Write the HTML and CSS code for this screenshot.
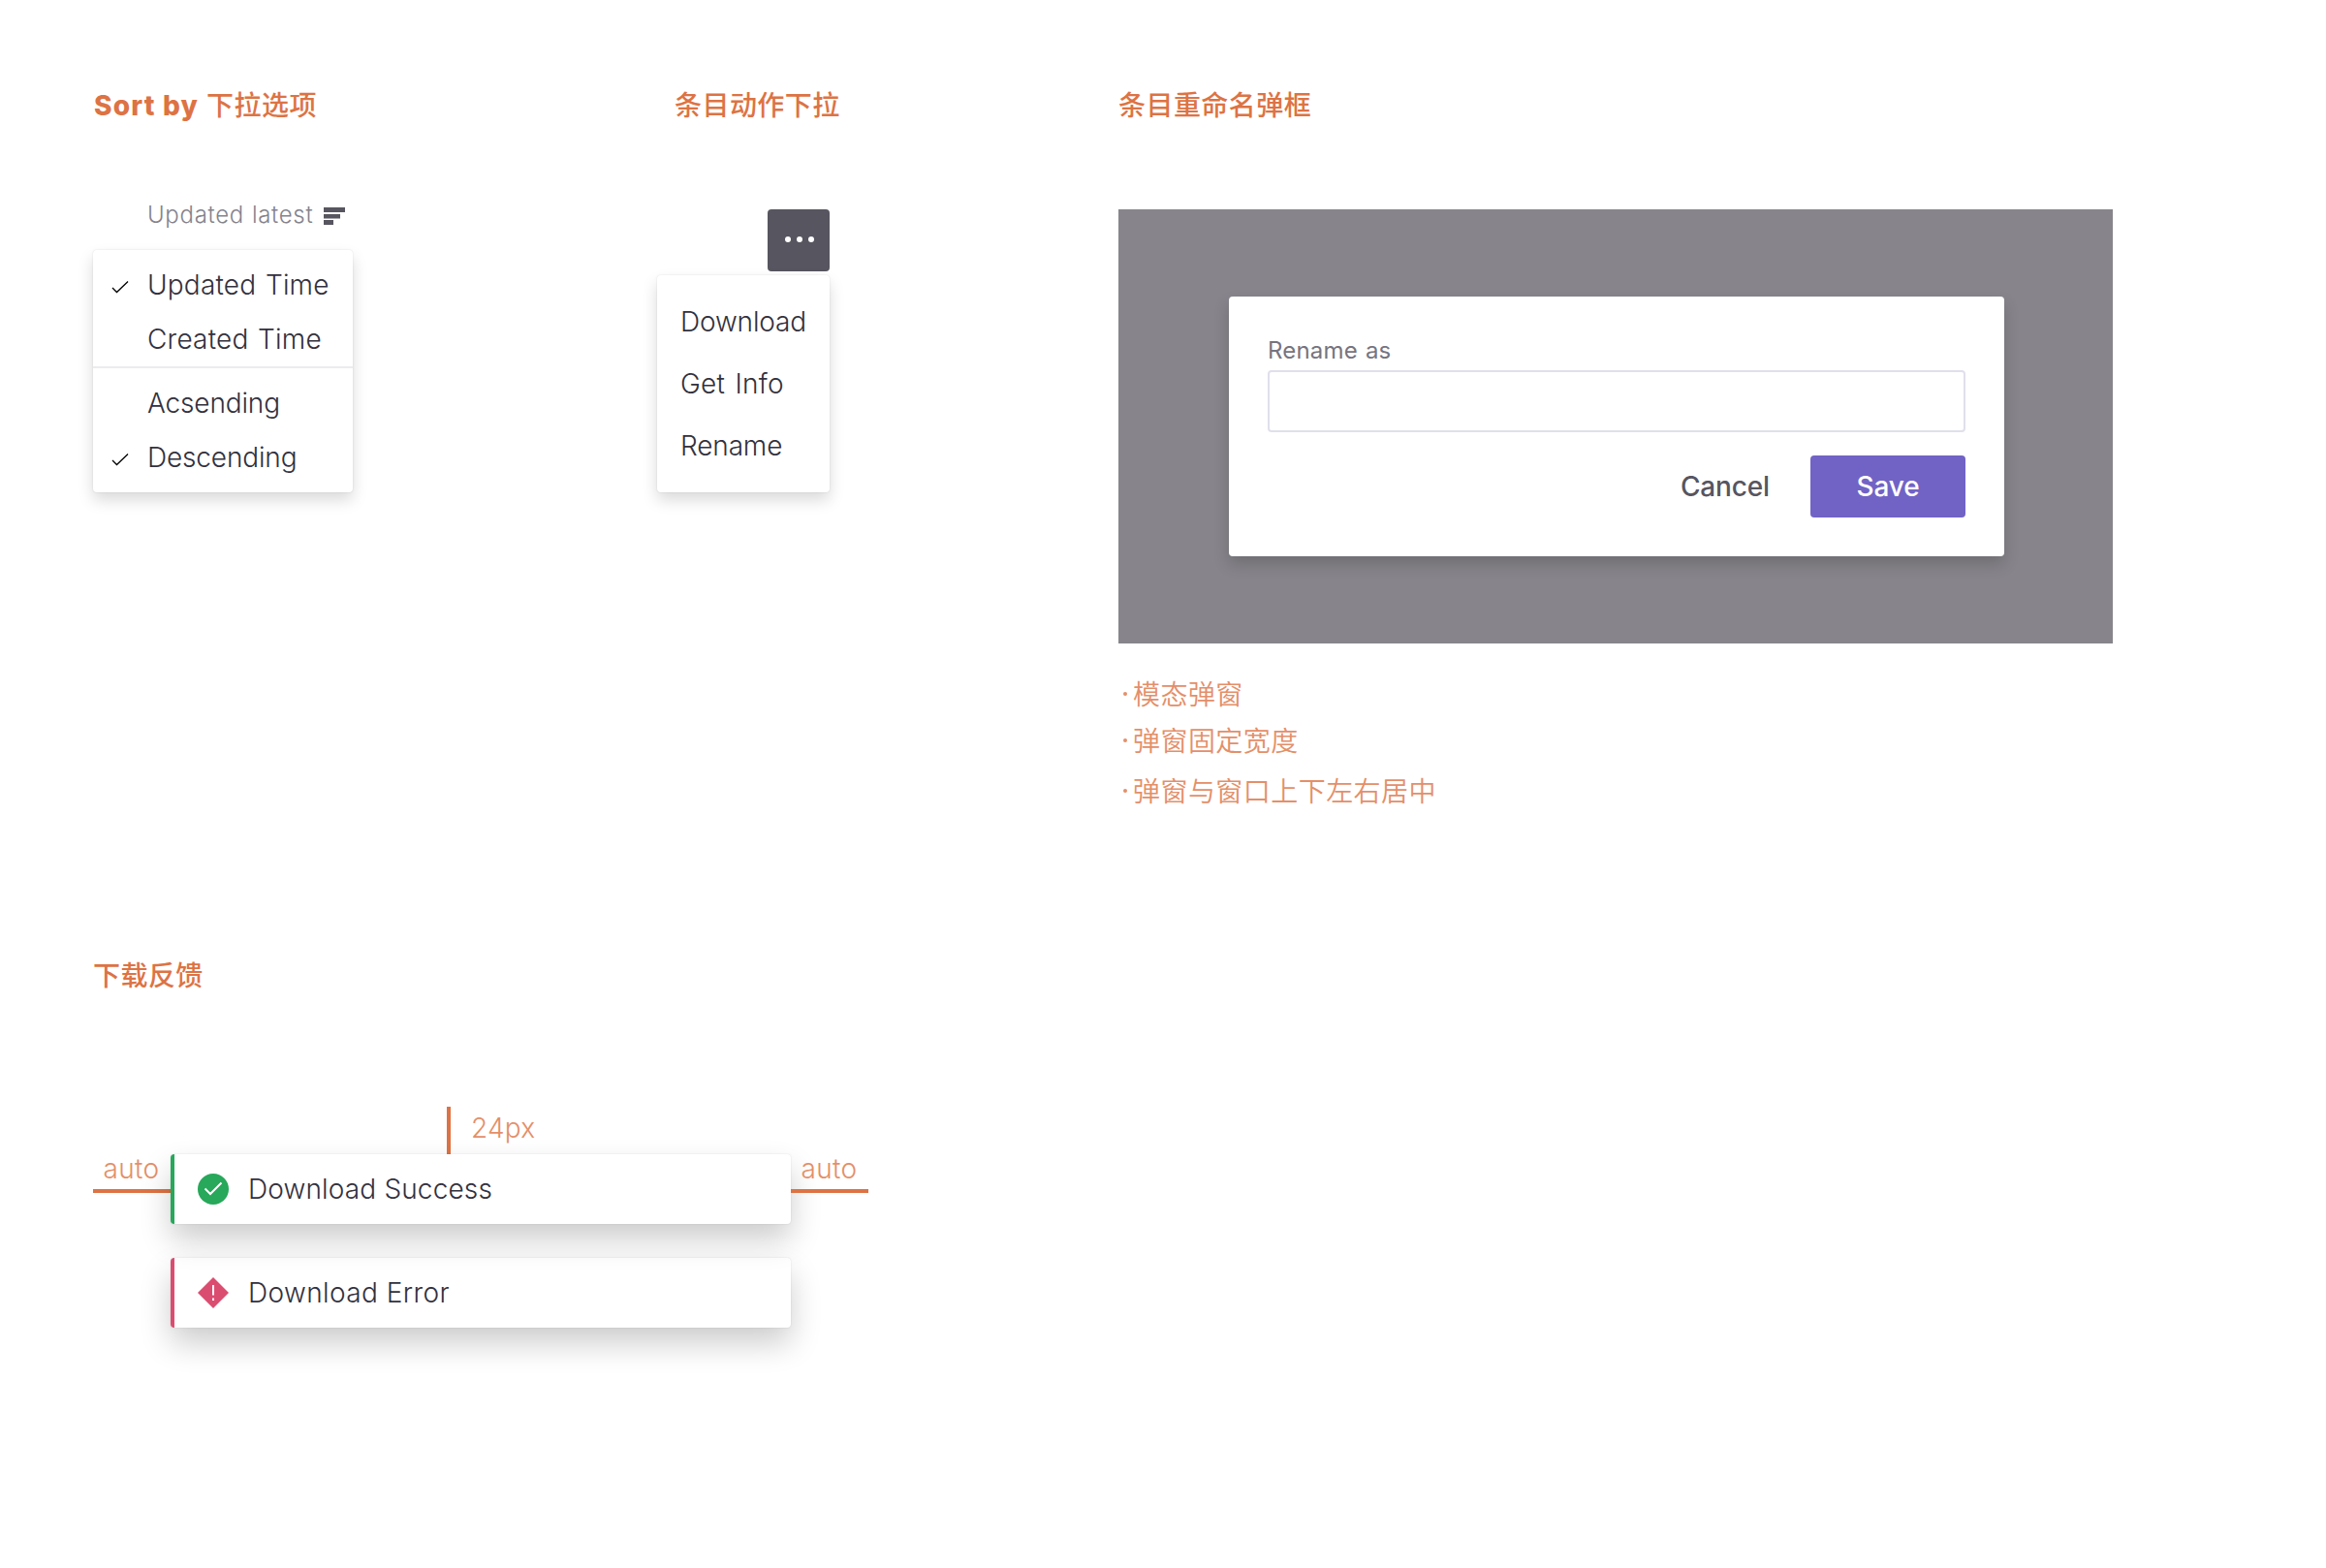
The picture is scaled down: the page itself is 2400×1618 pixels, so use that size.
FILE: index.html
```html
<!DOCTYPE html>
<html lang="zh-CN">
<head>
<meta charset="utf-8">
<title>Dropdowns, dialog and toasts</title>
<link rel="stylesheet" href="styles.css">
</head>
<body>
<main class="page">
  <div class="row">
    <section class="spec spec-sort">
      <h2 class="title"><span class="title-latin">Sort by</span>下拉选项</h2>
      <div class="sort-trigger">
        <span class="sort-label">Updated latest</span>
        <svg class="sort-icon" viewBox="0 0 22 18"><path d="M0 0h22v5H0zM0 7h17v4.500H0zM0 13h10v5H0z"/></svg>
      </div>
      <div class="menu">
        <ul class="group group-field">
          <li class="item"><svg class="tick" viewBox="0 0 18 14"><path d="M1 8 5.500 12.500 17 1.500"/></svg>Updated Time</li>
          <li class="item">Created Time</li>
        </ul>
        <ul class="group group-order">
          <li class="item">Acsending</li>
          <li class="item"><svg class="tick" viewBox="0 0 18 14"><path d="M1 8 5.500 12.500 17 1.500"/></svg>Descending</li>
        </ul>
      </div>
    </section>

    <section class="spec spec-actions">
      <h2 class="title">条目动作下拉</h2>
      <button class="more" aria-label="More"><svg class="more-icon" viewBox="0 0 64 64"><circle cx="21" cy="31" r="3"/><circle cx="33" cy="31" r="3"/><circle cx="45" cy="31" r="3"/></svg></button>
      <ul class="menu menu-actions">
        <li class="action">Download</li>
        <li class="action action-info">Get Info</li>
        <li class="action">Rename</li>
      </ul>
    </section>

    <section class="spec spec-rename">
      <h2 class="title">条目重命名弹框</h2>
      <div class="backdrop">
        <form class="dialog">
          <label class="field-label" for="name">Rename as</label>
          <input class="field" id="name" type="text">
          <div class="buttons">
            <button class="cancel" type="button">Cancel</button>
            <button class="save" type="button">Save</button>
          </div>
        </form>
      </div>
      <ul class="notes">
        <li class="note">模态弹窗</li>
        <li class="note">弹窗固定宽度</li>
        <li class="note note-last">弹窗与窗口上下左右居中</li>
      </ul>
    </section>
  </div>

  <section class="spec spec-toast">
    <h2 class="title">下载反馈</h2>
    <div class="top-gap">24px</div>
    <div class="toast-row">
      <div class="side">auto</div>
      <div class="toast toast-success">
        <svg class="state" viewBox="0 0 32 32"><circle cx="16" cy="16" r="16"/><path class="mark" d="m7.500 15.500 5.500 5.500L24.500 9.500"/></svg>
        <span>Download Success</span>
      </div>
      <div class="side">auto</div>
    </div>
    <div class="toast toast-error">
      <svg class="state" viewBox="0 0 32 32"><path d="M16 0 32 16 16 32 0 16z"/><path class="mark" d="M16 8v10.500M16 21.500V24"/></svg>
      <span>Download Error</span>
    </div>
  </section>
</main>
</body>
</html>
```
FILE: styles.css
```css
* { box-sizing: border-box; }
body { margin: 0; background: #fff; color: #33313d; font: 300 28px/56px Inter, "Noto Sans CJK SC", sans-serif; }
ul { list-style: none; margin: 0; padding: 0; }
button { border: 0; padding: 0; font: inherit; letter-spacing: inherit; }
svg { display: block; flex: none; }
.page { width: 2400px; height: 1618px; padding: 80px 0 0 96px; overflow: hidden; }
.row { display: flex; height: 898px; }
.title { margin: 0; height: 56px; padding-top: 1px; font-size: 28px; line-height: 56px; font-weight: 500; letter-spacing: .45px; color: #dd7344; white-space: nowrap; }
.title-latin { margin: 0 8px 0 1px; font-weight: 800; letter-spacing: 1.200px; }
.spec-sort { width: 582px; }
.spec-actions { width: 476px; }
.spec-rename { width: 1026px; }

.sort-trigger { display: flex; align-items: center; gap: 10px; height: 40px; margin: 66px 0 16px 56px; font-size: 24px; color: #85838d; }
.sort-label { width: 172px; letter-spacing: .7px; word-spacing: .5px; white-space: nowrap; }
.sort-icon { width: 22px; height: 18px; margin-top: 1px; fill: #57555f; }
.menu { width: 268px; border-radius: 4px; background: #fff; box-shadow: 0 0 2px rgba(0,0,0,.12), 0 8px 16px rgba(0,0,0,.15); letter-spacing: -.15px; }
.group { padding-top: 8px; }
.group-field { letter-spacing: .2px; word-spacing: 1.500px; }
.group-order { padding-bottom: 8px; border-top: 2px solid #ececee; }
.item { display: flex; align-items: center; height: 56px; padding-left: 56px; white-space: nowrap; }
.tick { width: 18px; height: 14px; margin: 3px 19px 0 -37px; fill: none; stroke: #000; stroke-width: 1.300; }

.more { display: block; width: 64px; height: 64px; margin: 80px 0 4px 114px; border-radius: 4px; background: #57555f; }
.more-icon { width: 64px; height: 64px; fill: #fff; }
.spec-actions .title { padding-left: 18px; }
.menu-actions { width: 178px; padding: 16px 24px; }
.action { height: 64px; line-height: 64px; white-space: nowrap; }
.action-info { letter-spacing: .2px; word-spacing: 2.500px; }

.backdrop { display: flex; align-items: center; justify-content: center; height: 448px; margin-top: 79px; padding-left: 2px; background: #87858b; }
.title + .backdrop { margin-top: 80px; }
.dialog { display: flex; flex-direction: column; width: 800px; height: 268px; padding: 36px 40px 40px; border-radius: 4px; background: #fff; box-shadow: 0 8px 16px rgba(0,0,0,.18); }
.field-label { height: 40px; font-size: 24px; line-height: 40px; font-weight: 400; letter-spacing: .2px; word-spacing: 1px; color: #76747f; }
.field { height: 64px; border: 2px solid #e0dfeb; border-radius: 4px; background: #fff; }
.buttons { display: flex; justify-content: flex-end; gap: 42px; margin-top: 24px; font-weight: 500; line-height: 64px; letter-spacing: -.15px; }
.cancel { background: none; color: #57555f; }
.save { width: 160px; height: 64px; border-radius: 4px; background: #7163c5; color: #fff; }
.notes { padding-top: 29px; letter-spacing: .45px; font-weight: 350; color: #e48f69; }
.note { display: flex; align-items: center; gap: 6px; height: 48px; }
.note::before { content: ""; width: 4px; height: 4px; margin: -2px 0 0 5px; border-radius: 50%; background: currentColor; }
.note-last { margin-top: 4px; }

.spec-toast { width: 800px; }
.top-gap { height: 49px; margin: 108px 0 0 365px; padding-left: 21px; border-left: 4px solid #dd7344; line-height: 44px; letter-spacing: .2px; color: #e48f69; }
.toast-row { display: flex; width: 800px; margin-bottom: 35px; }
.side { flex: none; width: 80px; height: 40px; padding-right: 1px; border-bottom: 4px solid #dd7344; line-height: 31px; text-align: center; letter-spacing: .4px; color: #e48f69; }
.toast { display: flex; flex: none; align-items: center; gap: 20px; width: 640px; height: 72px; padding-left: 24px; border-left: 4px solid; border-radius: 4px; background: #fff; box-shadow: 0 0 2px rgba(0,0,0,.12), 0 16px 32px rgba(0,0,0,.2); }
.toast span { color: #33313d; font-weight: 350; }
.toast-success { border-color: #27a85a; letter-spacing: .15px; }
.toast-error { margin-left: 80px; border-color: #db4d70; letter-spacing: .4px; }
.state { width: 32px; height: 32px; }
.toast-success .state { fill: #27a85a; }
.toast-error .state { fill: #db4d70; }
.state .mark { fill: none; stroke: #fff; stroke-width: 2; }
```
